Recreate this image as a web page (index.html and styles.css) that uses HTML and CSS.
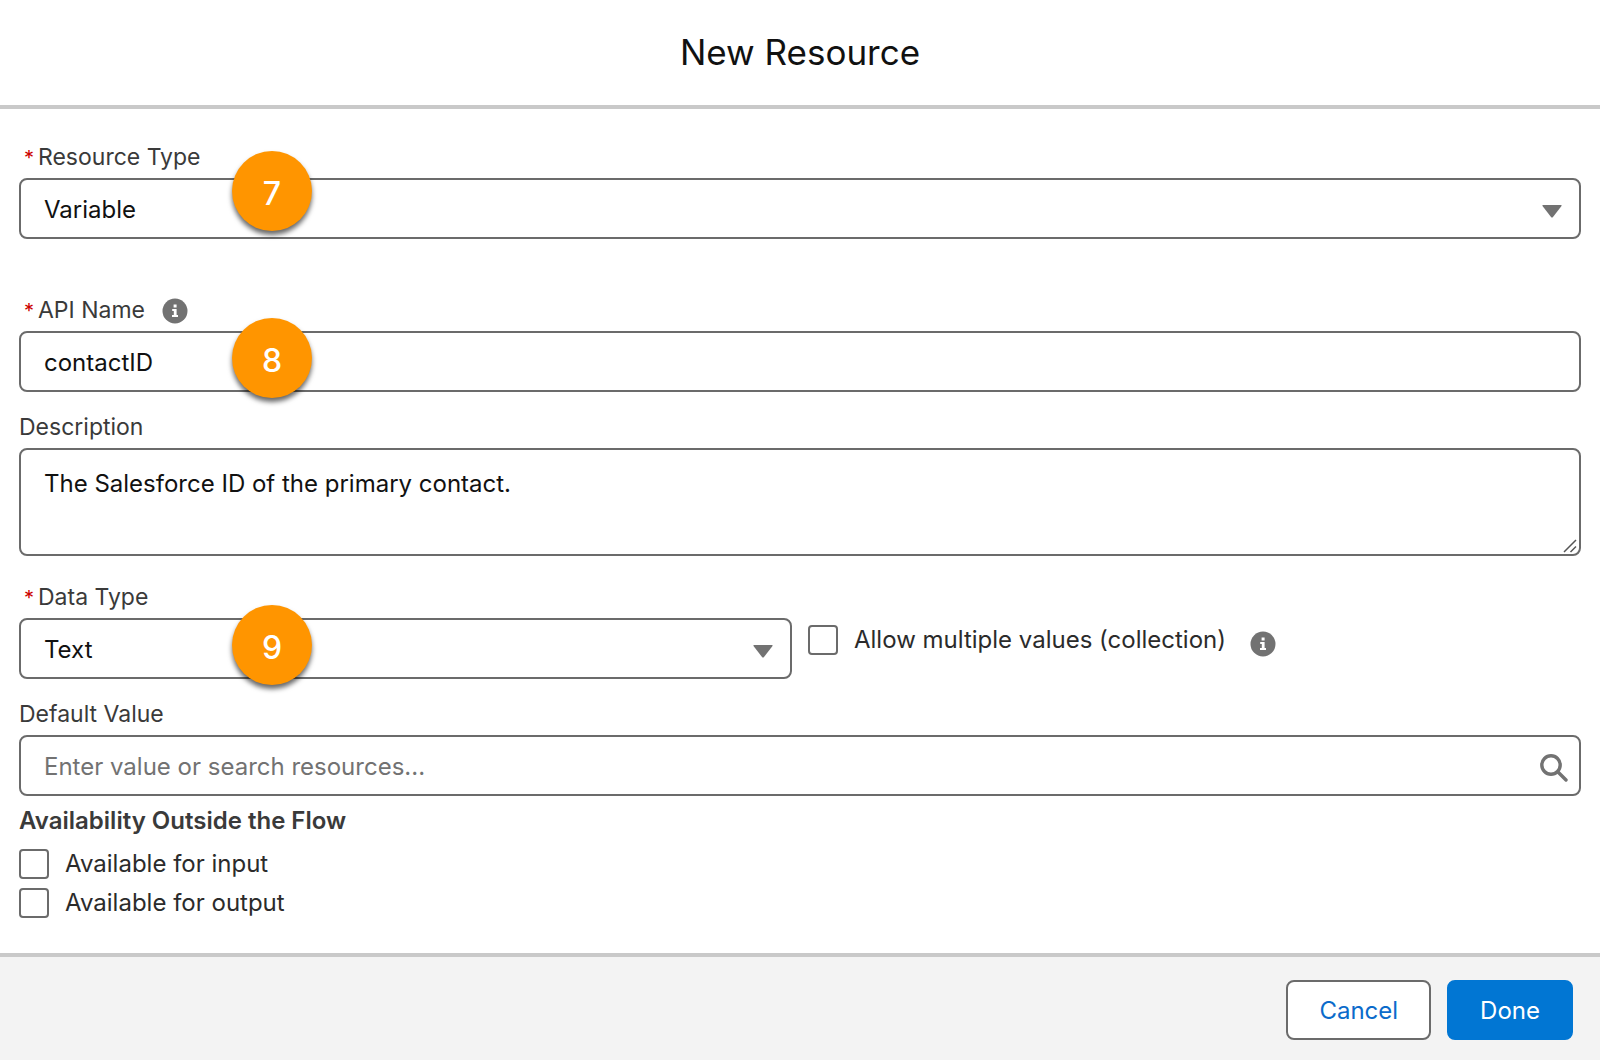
FILE: index.html
```
<!DOCTYPE html>
<html lang="en">

<head>
    <meta charset="utf-8">
    <title>New Resource</title>
    <link rel="stylesheet" href="styles.css">
</head>

<body>
<form class="modal">
    <header class="modal-header">
        <h1>New Resource</h1>
    </header>

    <main class="modal-body">
        <div class="field field-wide-gap">
            <label class="label" for="resource-type"><span class="required">*</span>Resource Type</label>
            <div class="control">
                <select id="resource-type" class="input">
                    <option>Variable</option>
                </select>
                <svg class="arrow" viewBox="0 0 20 13"><path d="M1 0h18q1 0 .5 1L11 12q-1 1-2 0L.5 1Q0 0 1 0z"/></svg>
                <span class="step step-high">7</span>
            </div>
        </div>

        <div class="field">
            <div class="label-row">
                <label class="label" for="api-name"><span class="required">*</span>API Name</label>
                <svg class="info" viewBox="0 0 26 26"><circle cx="13" cy="13" r="12.5"/><path d="M11.6 6.6h3v2.8h-3zM10.2 11h4.4v6h1.4v2h-6v-2h1.8v-4h-1.6z"/></svg>
            </div>
            <div class="control">
                <input type="text" id="api-name" class="input" value="contactID">
                <span class="step">8</span>
            </div>
        </div>

        <div class="field field-description">
            <label class="label" for="description">Description</label>
            <div class="control">
                <textarea id="description" class="input textarea">The Salesforce ID of the primary contact.</textarea>
                <svg class="grip" viewBox="0 0 14 14"><path d="M1 13L13 1M7.5 13L13 7.5"/></svg>
            </div>
        </div>

        <div class="columns">
            <div class="field">
                <label class="label" for="data-type"><span class="required">*</span>Data Type</label>
                <div class="control">
                    <select id="data-type" class="input">
                        <option>Text</option>
                    </select>
                    <svg class="arrow" viewBox="0 0 20 13"><path d="M1 0h18q1 0 .5 1L11 12q-1 1-2 0L.5 1Q0 0 1 0z"/></svg>
                    <span class="step">9</span>
                </div>
            </div>
            <div class="collection">
                <label class="check"><input type="checkbox">Allow multiple values (collection)</label>
                <svg class="info" viewBox="0 0 26 26"><circle cx="13" cy="13" r="12.5"/><path d="M11.6 6.6h3v2.8h-3zM10.2 11h4.4v6h1.4v2h-6v-2h1.8v-4h-1.6z"/></svg>
            </div>
        </div>

        <div class="field">
            <label class="label" for="default-value">Default Value</label>
            <div class="control">
                <input type="text" id="default-value" class="input" placeholder="Enter value or search resources...">
                <svg class="search" viewBox="0 0 28 28"><circle cx="11" cy="11" r="9.2"/><path d="M18 18l8 8"/></svg>
            </div>
        </div>

        <fieldset class="availability">
            <legend>Availability Outside the Flow</legend>
            <label class="check"><input type="checkbox">Available for input</label>
            <label class="check"><input type="checkbox">Available for output</label>
        </fieldset>
    </main>

    <footer class="modal-footer">
        <button type="button" class="btn">Cancel</button>
        <button type="button" class="btn btn-brand">Done</button>
    </footer>
</form>
</body>

</html>
```
FILE: styles.css
```
* {
    box-sizing: border-box;
}

body {
    margin: 0;
    background: #fff;
    color: #2b2b2b;
    font-family: Inter, "Liberation Sans", sans-serif;
    font-size: 24px;
    line-height: 32px;
}

.modal {
    display: flex;
    flex-direction: column;
    min-height: 100vh;
}

.modal-header {
    padding: 32px 20px;
    border-bottom: 4px solid #c9c9c9;
    text-align: center;
}

.modal-header h1 {
    margin: 0;
    color: #111;
    font-size: 35px;
    font-weight: 400;
    line-height: 41px;
}

.modal-body {
    flex: 1;
    padding: 33px 19px 35px;
}

.field {
    margin-bottom: 20px;
}

.field-wide-gap {
    margin-bottom: 56px;
}

.field-description {
    margin-bottom: 26px;
}

.label {
    display: block;
    margin-bottom: 6px;
    color: #3a3a3a;
    font-size: 23px;
    line-height: 30px;
}

.label-row {
    display: flex;
    gap: 17px;
}

.required {
    display: inline-block;
    width: 19px;
    padding-left: 5px;
    color: #c00;
    font-size: 20px;
    line-height: 20px;
}

.info {
    width: 26px;
    height: 26px;
    margin-top: 3px;
}

.info circle {
    fill: #727272;
}

.info path {
    fill: #fff;
}

.control {
    position: relative;
}

.input {
    display: block;
    width: 100%;
    height: 61px;
    margin: 0;
    padding: 2px 23px 0;
    border: 2px solid #6b6b6b;
    border-radius: 8px;
    outline: none;
    background: #fff;
    color: #111;
    font: inherit;
    appearance: none;
}

.input::placeholder {
    color: #727272;
    opacity: 1;
}

.textarea {
    height: 108px;
    padding: 18px 23px;
    resize: vertical;
}

.textarea::-webkit-resizer {
    display: none;
}

.grip {
    position: absolute;
    right: 4px;
    bottom: 3px;
    width: 14px;
    height: 14px;
    fill: none;
    stroke: #555;
    stroke-width: 1.5;
    pointer-events: none;
}

.arrow {
    position: absolute;
    top: 27px;
    right: 19px;
    width: 20px;
    height: 13px;
    fill: #727272;
    pointer-events: none;
}

.search {
    position: absolute;
    top: 19px;
    right: 13px;
    width: 28px;
    height: 28px;
    fill: none;
    stroke: #727272;
    stroke-width: 3.4;
    stroke-linecap: round;
}

/* numbered callouts */
.step {
    position: absolute;
    top: -13px;
    left: 213px;
    width: 80px;
    height: 80px;
    border-radius: 50%;
    background: #ff9500;
    box-shadow: 0 4px 5px rgba(0, 0, 0, .6);
    color: #fff;
    font-size: 32px;
    font-weight: 500;
    line-height: 86px;
    text-align: center;
}

.step-high {
    top: -27px;
}

.columns {
    display: grid;
    grid-template-columns: 1fr 1fr;
    gap: 16px;
}

.collection {
    display: flex;
    gap: 24px;
    padding-top: 43px;
}

.collection .info {
    margin-top: 6px;
}

.check {
    display: flex;
    align-items: center;
    gap: 16px;
    height: 30px;
}

.check input {
    width: 30px;
    height: 30px;
    margin: 0;
    border: 2px solid #6b6b6b;
    border-radius: 4px;
    background: #fff;
    appearance: none;
}

.check input:checked {
    background: #0176d3;
}

.availability {
    display: grid;
    gap: 9px;
    margin: -11px 0 0;
    padding: 0;
    border: 0;
}

.availability legend {
    margin-bottom: 12px;
    padding: 0;
    color: #3a3a3a;
    font-size: 24px;
    font-weight: 600;
}

.modal-footer {
    display: flex;
    justify-content: flex-end;
    gap: 16px;
    padding: 23px 27px 20px;
    border-top: 4px solid #c9c9c9;
    background: #f3f3f3;
}

.btn {
    height: 60px;
    padding: 2px 31px 0;
    border: 2px solid #6b6b6b;
    border-radius: 8px;
    background: #fff;
    color: #0b6bcb;
    font: inherit;
    cursor: pointer;
}

.btn-brand {
    border-color: #0176d3;
    background: #0176d3;
    color: #fff;
}
```
